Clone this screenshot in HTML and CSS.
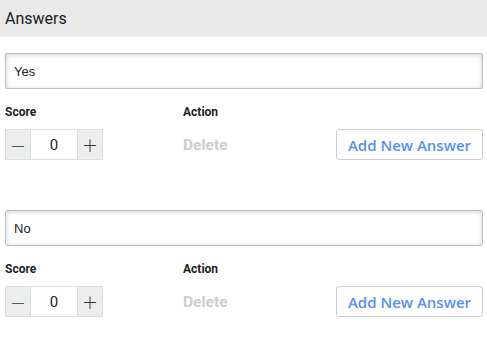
FILE: index.html
```html
<!DOCTYPE html>
<html lang="en">
<head>
    <meta charset="UTF-8">
    <title>Answers</title>
    <link rel="stylesheet" href="styles.css">
</head>
<body>
    <div class="panel-head">Answers</div>

    <div class="answers">
        <div class="answer">
            <input class="answer-text" type="text" value="Yes">
            <div class="label">Score</div>
            <div class="label">Action</div>
            <div></div>
            <div class="stepper">
                <button class="step-btn">&minus;</button>
                <input class="step-val" type="text" value="0">
                <button class="step-btn">+</button>
            </div>
            <span class="delete">Delete</span>
            <button class="add-btn">Add New Answer</button>
        </div>

        <div class="answer">
            <input class="answer-text" type="text" value="No">
            <div class="label">Score</div>
            <div class="label">Action</div>
            <div></div>
            <div class="stepper">
                <button class="step-btn">&minus;</button>
                <input class="step-val" type="text" value="0">
                <button class="step-btn">+</button>
            </div>
            <span class="delete">Delete</span>
            <button class="add-btn">Add New Answer</button>
        </div>
    </div>
</body>
</html>
```

FILE: styles.css
```css
body {
    margin: 0;
    font-family: Roboto, 'Liberation Sans', Arial, sans-serif;
    color: #222;
    background: #fff;
    overflow: hidden;
}
.panel-head {
    background: #e9e9e9;
    height: 37px;
    line-height: 38px;
    padding-left: 5px;
    font-size: 16px;
    color: #1a1a1a;
}
.answers {
    padding: 16px 4px 0 5px;
}
.answer {
    display: grid;
    grid-template-columns: 178px 1fr auto;
    align-items: center;
    margin-bottom: 50px;
}
.answer:last-child {
    margin-bottom: 0;
}
.answer-text {
    grid-column: 1 / 4;
    box-sizing: border-box;
    width: 100%;
    height: 36px;
    margin: 0;
    border: 1px solid #bdbdbd;
    border-radius: 2px;
    box-shadow: inset 0 1px 5px rgba(0,0,0,0.18);
    padding: 0 8px;
    font-family: 'Liberation Sans', Arial, sans-serif;
    font-size: 13px;
    color: #222;
    outline: none;
}
.label {
    font-size: 12px;
    font-weight: 700;
    margin-top: 16px;
    margin-bottom: 10px;
    line-height: 14px;
}
.stepper {
    display: flex;
    height: 31px;
}
.step-btn {
    width: 26px;
    height: 31px;
    margin: 0;
    padding: 0;
    border: 1px solid #ddd;
    background: #eceeee;
    font-family: 'DejaVu Sans', sans-serif;
    font-size: 19px;
    font-weight: 300;
    color: #333;
    line-height: 28px;
}
.step-val {
    box-sizing: border-box;
    width: 46px;
    height: 31px;
    margin: 0;
    border: 1px solid #ddd;
    border-left: none;
    border-right: none;
    text-align: center;
    font-family: Roboto, sans-serif;
    font-size: 15px;
    color: #222;
    outline: none;
}
.delete {
    font-size: 15.5px;
    font-weight: 700;
    color: #cdcdcd;
}
.add-btn {
    height: 31px;
    padding: 0 11px;
    margin: 0;
    border: 1px solid #ccc;
    border-radius: 3px;
    background: #fff;
    font-family: 'Open Sans', 'Noto Sans', sans-serif;
    font-size: 15px;
    font-weight: 600;
    color: #5590f5;
}
```
